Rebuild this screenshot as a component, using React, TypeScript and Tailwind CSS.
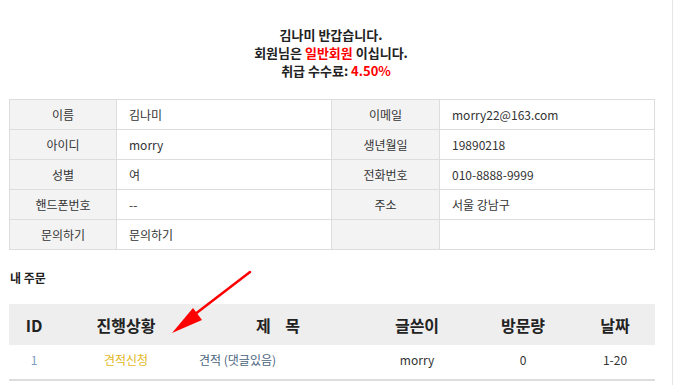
const INFO: [string, string, string, string][] = [
  ['이름', '김나미', '이메일', 'morry22@163.com'],
  ['아이디', 'morry', '생년월일', '19890218'],
  ['성별', '여', '전화번호', '010-8888-9999'],
  ['핸드폰번호', '--', '주소', '서울 강남구'],
  ['문의하기', '문의하기', '', ''],
];

const label = 'h-[30px] border border-[#ddd] bg-[#f3f3f3] text-center text-[#333]';
const value = 'h-[30px] border border-[#ddd] bg-white pl-[12px] text-left text-[#333]';

export default function App() {
  return (
    <div
      className="relative h-[385px] w-[673px] overflow-hidden border-r border-[#e5e5e5] bg-white text-[12px] text-[#333]"
      style={{ fontFamily: '"Noto Sans CJK KR", "Noto Sans", "Liberation Sans", sans-serif' }}
    >
      {/* Greeting */}
      <div className="pt-[26px] text-center text-[13px] font-bold leading-[18px] text-[#222]">
        <p className="pr-[10px]">김나미 반갑습니다.</p>
        <p className="pr-[10px]">
          회원님은 <span className="text-[#f00]">일반회원</span> 이십니다.
        </p>
        <p>
          취급 수수료: <span className="text-[#f00]">4.50%</span>
        </p>
      </div>

      {/* Member info */}
      <table className="ml-[9px] mt-[19px] w-[646px] table-fixed border-collapse">
        <colgroup>
          <col className="w-[107px]" />
          <col className="w-[215px]" />
          <col className="w-[108px]" />
          <col />
        </colgroup>
        <tbody>
          {INFO.map(([l1, v1, l2, v2]) => (
            <tr key={l1}>
              <td className={label}>{l1}</td>
              <td className={value + (l1 === '문의하기' ? ' text-[#4a6a8a]' : '')}>{v1}</td>
              <td className={label}>{l2}</td>
              <td className={value}>{v2}</td>
            </tr>
          ))}
        </tbody>
      </table>

      <p className="ml-[10px] mt-[19px] font-bold text-[#222]">내 주문</p>

      {/* Orders */}
      <table className="ml-[9px] mt-[17px] w-[646px] table-fixed border-collapse">
        <colgroup>
          <col className="w-[50px]" />
          <col className="w-[134px]" />
          <col className="w-[170px]" />
          <col className="w-[108px]" />
          <col className="w-[104px]" />
          <col />
        </colgroup>
        <thead>
          <tr className="h-[41px] bg-[#eee] text-[16px] font-bold text-[#222]">
            <th className="text-center">ID</th>
            <th className="text-center">진행상황</th>
            <th className="text-center">제&nbsp;&nbsp;&nbsp;&nbsp;목</th>
            <th className="text-center">글쓴이</th>
            <th className="text-center">방문량</th>
            <th className="text-center">날짜</th>
          </tr>
        </thead>
        <tbody>
          <tr className="h-[35px] border-b-2 border-[#ddd]">
            <td className="pb-[5px] text-center text-[#7a9cc0]">1</td>
            <td className="pb-[5px] text-center text-[#e3b820]">견적신청</td>
            <td className="pb-[5px] pl-[6px] text-left text-[#4a6580]">견적 (댓글있음)</td>
            <td className="pb-[5px] text-center">morry</td>
            <td className="pb-[5px] text-center">0</td>
            <td className="pb-[5px] text-center">1-20</td>
          </tr>
        </tbody>
      </table>

      {/* Red annotation arrow */}
      <svg className="pointer-events-none absolute left-0 top-0" width="673" height="385">
        <line x1="250" y1="272" x2="190" y2="318" stroke="#f00" strokeWidth="2.5" strokeLinecap="round" />
        <polygon points="172,333 193,308 202,320" fill="#f00" />
      </svg>
    </div>
  );
}
